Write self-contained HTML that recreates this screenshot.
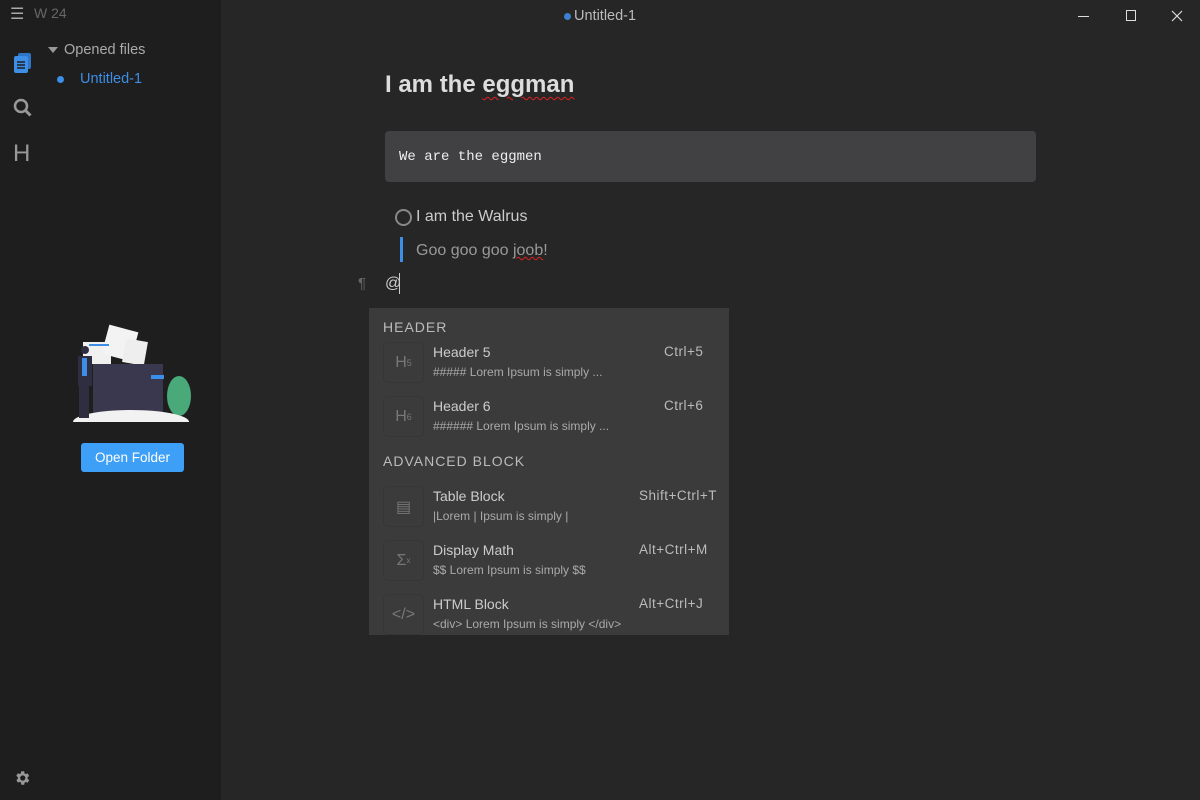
<!DOCTYPE html>
<html><head><meta charset="utf-8"><style>
*{margin:0;padding:0;box-sizing:border-box}
body{width:1200px;height:800px;background:#262626;font-family:"Liberation Sans",sans-serif;position:relative;overflow:hidden;color:#ccc}
.side{position:absolute;left:0;top:0;width:221px;height:800px;background:#1e1e1e}
.abs{position:absolute}
.t{white-space:nowrap}
.pop{position:absolute;left:369px;top:308px;width:360px;height:327px;background:#3b3b3b}
.ic{position:absolute;left:14px;width:41px;height:41px;border:1px solid #363636;border-radius:5px;color:#777;font-size:16px;display:flex;align-items:center;justify-content:center}
.it{position:absolute;left:64px;font-size:14px;color:#ccc}
.ds{position:absolute;left:64px;font-size:12px;color:#aaa}
.kb{position:absolute;font-size:13.5px;color:#bbb;letter-spacing:.5px}
.sec{position:absolute;left:14px;font-size:14px;letter-spacing:1px;color:#bbb}
</style></head><body>
<div class="side">
<div class="abs t" style="left:10px;top:4px;font-size:16px;color:#aaa">☰</div>
<div class="abs t" style="left:34px;top:5px;font-size:14px;color:#666">W 24</div>
<div class="abs" style="left:48px;top:47px;width:0;height:0;border-left:5px solid transparent;border-right:5px solid transparent;border-top:6px solid #999"></div>
<div class="abs t" style="left:64px;top:42px;font-size:14.5px;color:#aaa">Opened files</div>
<div class="abs" style="left:57px;top:76px;width:7px;height:7px;border-radius:50%;background:#3d8ee6"></div>
<div class="abs t" style="left:80px;top:71px;font-size:14.5px;color:#3d8ee6">Untitled-1</div>
<svg class="abs" style="left:13px;top:52px" width="20" height="22" viewBox="0 0 20 22"><rect x="5" y="1" width="13" height="16" rx="2" fill="#2f75c6"/><rect x="1" y="4" width="14" height="17" rx="2" fill="#3d8ee6"/><path d="M4 10h8M4 13h8M4 16h8" stroke="#1e1e1e" stroke-width="1.5"/></svg>
<svg class="abs" style="left:13px;top:98px" width="20" height="20"><circle cx="8" cy="8" r="6" stroke="#999" stroke-width="2.5" fill="none"/><path d="M12.5 12.5l5 5" stroke="#999" stroke-width="3"/></svg>
<div class="abs t" style="left:13px;top:140px;font-size:24px;color:#999">H</div>
<svg class="abs" style="left:67px;top:318px" width="130" height="108" viewBox="0 0 130 108">
<rect x="16" y="24" width="28" height="22" fill="#f0f0f0"/><rect x="38" y="10" width="30" height="30" fill="#f3f3f3" transform="rotate(15 53 25)"/><rect x="57" y="22" width="22" height="24" fill="#eee" transform="rotate(10 68 34)"/>
<rect x="22" y="26" width="20" height="2" fill="#3d8ee6"/>
<path d="M26 46h70v55H26z" fill="#3a384f"/><rect x="84" y="57" width="13" height="4" fill="#3d8ee6"/>
<ellipse cx="112" cy="78" rx="12" ry="20" fill="#4aa978"/>
<ellipse cx="64" cy="104" rx="58" ry="12" fill="#f2f2f2"/>
<rect x="0" y="104" width="130" height="4" fill="#1e1e1e"/>
<circle cx="18" cy="32" r="4" fill="#2f2e41"/><rect x="11" y="38" width="14" height="30" fill="#2f2e41"/><rect x="15" y="40" width="5" height="18" fill="#3d8ee6"/><rect x="12" y="66" width="10" height="34" fill="#2f2e41"/>
</svg>
<div class="abs t" style="left:81px;top:443px;width:103px;height:29px;background:#3d9ff5;border-radius:3px;color:#fff;font-size:13.5px;text-align:center;line-height:29px">Open Folder</div>
<svg class="abs" style="left:13px;top:769px" width="18" height="18" viewBox="0 0 24 24"><path fill="#999" d="M19.4 13a7.5 7.5 0 000-2l2.1-1.6-2-3.5-2.5 1a7 7 0 00-1.7-1L15 3h-4l-.4 2.7a7 7 0 00-1.7 1l-2.5-1-2 3.5L6.6 11a7.5 7.5 0 000 2l-2.1 1.6 2 3.5 2.5-1a7 7 0 001.7 1L11 21h4l.4-2.7a7 7 0 001.7-1l2.5 1 2-3.5zM13 15.5a3.5 3.5 0 110-7 3.5 3.5 0 010 7z"/></svg>
</div>
<div class="abs" style="left:564px;top:13px;width:7px;height:7px;border-radius:50%;background:#3d7fd0"></div>
<div class="abs t" style="left:574px;top:8px;font-size:14.5px;color:#bbb">Untitled-1</div>
<div class="abs" style="left:1078px;top:16px;width:11px;height:1px;background:#ddd"></div>
<div class="abs" style="left:1126px;top:10px;width:10px;height:11px;border:1px solid #ddd"></div>
<svg class="abs" style="left:1171px;top:10px" width="12" height="12"><path d="M1 1l10 10M11 1L1 11" stroke="#ddd" stroke-width="1.2"/></svg>
<div class="abs t" style="left:385px;top:71px;font-size:24px;font-weight:bold;color:#ddd">I am the <span style="text-decoration:underline wavy #d22;text-underline-offset:4px;text-decoration-thickness:1px">eggman</span></div>
<div class="abs" style="left:385px;top:131px;width:651px;height:51px;background:#414143;border-radius:4px"></div>
<div class="abs t" style="left:399px;top:149px;font-family:'Liberation Mono',monospace;font-size:14px;color:#eee">We are the eggmen</div>
<div class="abs" style="left:395px;top:209px;width:17px;height:17px;border:2px solid #888;border-radius:50%"></div>
<div class="abs t" style="left:416px;top:208px;font-size:16px;color:#ccc">I am the Walrus</div>
<div class="abs" style="left:400px;top:237px;width:3px;height:25px;background:#3d8ee6"></div>
<div class="abs t" style="left:416px;top:242px;font-size:16px;color:#999">Goo goo goo <span style="text-decoration:underline wavy #d22;text-decoration-thickness:1px">joob</span>!</div>
<div class="abs t" style="left:358px;top:275px;font-size:15px;color:#666">¶</div>
<div class="abs t" style="left:385px;top:275px;font-size:16px;color:#ccc">@</div>
<div class="abs" style="left:399px;top:273px;width:1px;height:21px;background:#ccc"></div>
<div class="pop">
<div class="sec t" style="top:11px">HEADER</div>
<div class="ic" style="top:34px">H<sub style="font-size:9px">5</sub></div><div class="it t" style="top:36px">Header 5</div><div class="ds t" style="top:57px">##### Lorem Ipsum is simply ...</div><div class="kb t" style="left:295px;top:36px">Ctrl+5</div>
<div class="ic" style="top:88px">H<sub style="font-size:9px">6</sub></div><div class="it t" style="top:90px">Header 6</div><div class="ds t" style="top:111px">###### Lorem Ipsum is simply ...</div><div class="kb t" style="left:295px;top:90px">Ctrl+6</div>
<div class="sec t" style="top:145px">ADVANCED BLOCK</div>
<div class="ic" style="top:178px">▤</div><div class="it t" style="top:180px">Table Block</div><div class="ds t" style="top:201px">|Lorem | Ipsum is simply |</div><div class="kb t" style="left:270px;top:180px">Shift+Ctrl+T</div>
<div class="ic" style="top:232px">Σ<sup style="font-size:8px">x</sup></div><div class="it t" style="top:234px">Display Math</div><div class="ds t" style="top:255px">$$ Lorem Ipsum is simply $$</div><div class="kb t" style="left:270px;top:234px">Alt+Ctrl+M</div>
<div class="ic" style="top:286px;height:41px">&lt;/&gt;</div><div class="it t" style="top:288px">HTML Block</div><div class="ds t" style="top:309px">&lt;div&gt; Lorem Ipsum is simply &lt;/div&gt;</div><div class="kb t" style="left:270px;top:288px">Alt+Ctrl+J</div>
</div>
</body></html>
